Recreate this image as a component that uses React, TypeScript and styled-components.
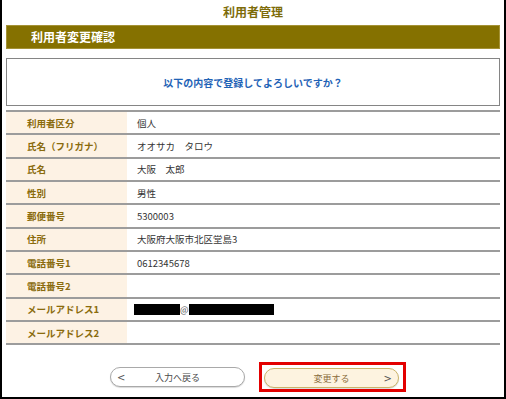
import React from "react";
import styled, { createGlobalStyle } from "styled-components";

const GlobalStyle = createGlobalStyle`
  html, body {
    margin: 0;
    padding: 0;
    background: #fff;
  }
  body {
    font-family: "Noto Sans CJK JP", "Noto Sans", sans-serif;
  }
`;

const Frame = styled.div`
  box-sizing: border-box;
  width: 506px;
  height: 399px;
  border: 2px solid #000;
  border-top: none;
  padding: 0 4px;
  display: flex;
  flex-direction: column;
`;

const PageTitle = styled.h1`
  margin: 0;
  height: 25px;
  line-height: 24px;
  text-align: center;
  font-size: 12px;
  font-weight: 700;
  color: #7d6b08;
`;

const SectionBar = styled.h2`
  box-sizing: border-box;
  margin: 0;
  height: 24px;
  padding-left: 24px;
  line-height: 22px;
  background: #857100;
  border: 1px solid #a49236;
  color: #fff;
  font-size: 12px;
  font-weight: 700;
`;

const Notice = styled.div`
  box-sizing: border-box;
  margin-top: 9px;
  height: 48px;
  border: 1px solid #858585;
  display: flex;
  align-items: center;
  justify-content: center;
  color: #1f63b6;
  font-size: 10px;
  font-weight: 700;
`;

const Table = styled.div`
  margin-top: 4px;
  border-bottom: 2px solid #9c9c9c;
`;

const Row = styled.div`
  display: grid;
  grid-template-columns: 121px 1fr;
  height: 23.33px;
  box-sizing: border-box;
  border-top: 2px solid #9c9c9c;
`;

const Label = styled.div`
  background: #fdf2e4;
  padding-left: 21px;
  display: flex;
  align-items: center;
  color: #8a6b0c;
  font-size: 9.5px;
  font-weight: 700;
`;

const Value = styled.div`
  padding-left: 10px;
  display: flex;
  align-items: center;
  color: #333;
  font-size: 9.5px;
`;

const Redacted = styled.span<{ $w: number }>`
  display: inline-block;
  width: ${(p) => p.$w}px;
  height: 11px;
  background: #000;
  &:first-child {
    margin-left: -3px;
  }
`;

const At = styled.span`
  font-size: 9px;
  color: #555;
`;

const ButtonBar = styled.div`
  display: flex;
  align-items: center;
  gap: 14px;
  margin-top: 17px;
  padding-left: 104px;
`;

const PillButton = styled.button<{ $primary?: boolean }>`
  box-sizing: border-box;
  position: relative;
  width: 135px;
  height: 20px;
  border-radius: 10px;
  border: 1.5px solid ${(p) => (p.$primary ? "#cbb46a" : "#a9a9a9")};
  background: ${(p) => (p.$primary ? "#fdf3e0" : "#fff")};
  color: ${(p) => (p.$primary ? "#8a6c3a" : "#4a4a4a")};
  font-family: "Noto Sans CJK JP", sans-serif;
  font-size: 9px;
  padding: 0;
  display: flex;
  align-items: center;
  justify-content: center;
  box-shadow: 0 1px 1px rgba(0, 0, 0, 0.15);
`;

const Arrow = styled.span<{ $side: "left" | "right" }>`
  position: absolute;
  top: 50%;
  transform: translateY(-50%);
  ${(p) => (p.$side === "left" ? "left: 6px;" : "right: 6px;")}
  font-family: "DejaVu Sans", sans-serif;
  font-size: 10px;
  color: #555;
`;

const Highlight = styled.div`
  border: 3px solid #e30000;
  padding: 3px 4px 1px 2px;
`;

const rows: { label: string; value: React.ReactNode }[] = [
  { label: "利用者区分", value: "個人" },
  { label: "氏名（フリガナ）", value: "オオサカ　タロウ" },
  { label: "氏名", value: "大阪　太郎" },
  { label: "性別", value: "男性" },
  { label: "郵便番号", value: "5300003" },
  { label: "住所", value: "大阪府大阪市北区堂島3" },
  { label: "電話番号1", value: "0612345678" },
  { label: "電話番号2", value: "" },
  {
    label: "メールアドレス1",
    value: (
      <>
        <Redacted $w={46} />
        <At>@</At>
        <Redacted $w={85} />
      </>
    ),
  },
  { label: "メールアドレス2", value: "" },
];

export default function App() {
  return (
    <>
      <GlobalStyle />
      <Frame>
        <PageTitle>利用者管理</PageTitle>
        <SectionBar>利用者変更確認</SectionBar>
        <Notice>以下の内容で登録してよろしいですか？</Notice>
        <Table>
          {rows.map((r) => (
            <Row key={r.label}>
              <Label>{r.label}</Label>
              <Value>{r.value}</Value>
            </Row>
          ))}
        </Table>
        <ButtonBar>
          <PillButton type="button">
            <Arrow $side="left">&lt;</Arrow>
            入力へ戻る
          </PillButton>
          <Highlight>
            <PillButton type="button" $primary>
              変更する
              <Arrow $side="right">&gt;</Arrow>
            </PillButton>
          </Highlight>
        </ButtonBar>
      </Frame>
    </>
  );
}
